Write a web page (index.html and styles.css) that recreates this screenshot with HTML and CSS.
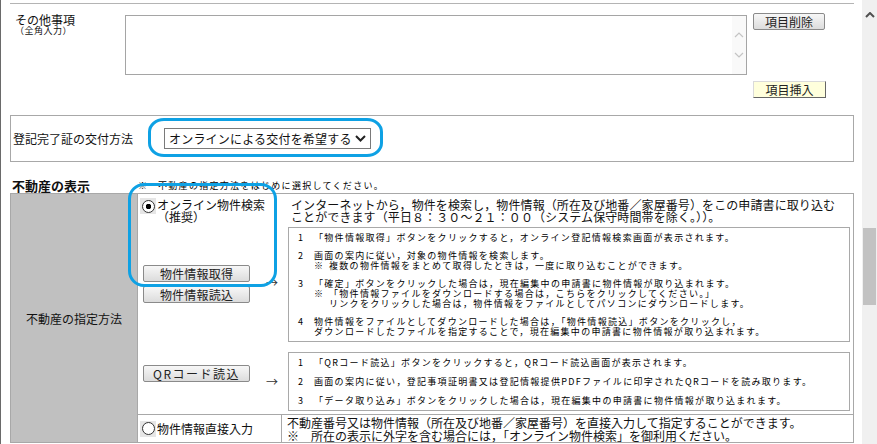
FILE: index.html
```html
<!DOCTYPE html>
<html lang="ja">
<head>
    <meta charset="UTF-8">
    <title>不動産の表示</title>
    <link rel="stylesheet" href="styles.css">
</head>
<body>
<div class="window">
    <div class="page">
        <div class="rule"></div>

        <section class="other">
            <div class="other-label">
                <div>その他事項</div>
                <div class="sub">（全角入力）</div>
            </div>
            <div class="memo">
                <textarea></textarea>
                <div class="memo-scroll">
                    <svg width="10" height="6" viewBox="0 0 10 6"><polyline points="1,5 5,1 9,5"/></svg>
                    <svg width="10" height="6" viewBox="0 0 10 6"><polyline points="1,1 5,5 9,1"/></svg>
                </div>
            </div>
            <div class="item-btns">
                <button class="btn btn-del">項目削除</button>
                <button class="btn btn-ins">項目挿入</button>
            </div>
        </section>

        <section class="delivery">
            <div class="delivery-label">登記完了証の交付方法</div>
            <div class="select">
                <span>オンラインによる交付を希望する</span>
                <svg class="select-arrow" width="11" height="7" viewBox="0 0 11 7"><polyline points="1,1 5.5,5.5 10,1"/></svg>
            </div>
        </section>

        <div class="heading">
            <h3>不動産の表示</h3>
            <p class="small"><span class="kome kome-head">※</span>不動産の指定方法をはじめに選択してください。</p>
        </div>

        <div class="prop-table">
            <div class="prop-head">不動産の指定方法</div>
            <div class="prop-body">
                <div class="opt-online">
                    <label class="radio-label wide"><span class="radio checked"></span><span>オンライン物件検索<br>（推奨）</span></label>
                    <p class="intro">インターネットから，物件を検索し，物件情報（所在及び地番／家屋番号）をこの申請書に取り込む<br>ことができます（平日８：３０～２１：００（システム保守時間帯を除く。））。</p>

                    <div class="btn-stack">
                        <button class="btn btn-wide">物件情報取得</button>
                        <button class="btn btn-wide">物件情報読込</button>
                    </div>
                    <div class="arrow arrow-1">→</div>
                    <ol class="steps small">
                        <li><span class="no">1</span><div>「物件情報取得」ボタンをクリックすると，オンライン登記情報検索画面が表示されます。</div></li>
                        <li><span class="no">2</span><div>画面の案内に従い，対象の物件情報を検索します。
                            <div class="note"><span class="kome">※</span><span>複数の物件情報をまとめて取得したときは，一度に取り込むことができます。</span></div></div></li>
                        <li><span class="no">3</span><div>「確定」ボタンをクリックした場合は，現在編集中の申請書に物件情報が取り込まれます。
                            <div class="note"><span class="kome">※</span><span>「物件情報ファイルをダウンロードする場合は，こちらをクリックしてください。」<br>リンクをクリックした場合は，物件情報をファイルとしてパソコンにダウンロードします。</span></div></div></li>
                        <li><span class="no">4</span><div>物件情報をファイルとしてダウンロードした場合は，「物件情報読込」ボタンをクリックし，<br>ダウンロードしたファイルを指定することで，現在編集中の申請書に物件情報が取り込まれます。</div></li>
                    </ol>

                    <button class="btn btn-wide btn-qr">QRコード読込</button>
                    <div class="arrow arrow-2">→</div>
                    <ol class="steps steps-qr small">
                        <li><span class="no">1</span><div>「QRコード読込」ボタンをクリックすると，QRコード読込画面が表示されます。</div></li>
                        <li><span class="no">2</span><div>画面の案内に従い，登記事項証明書又は登記情報提供PDFファイルに印字されたQRコードを読み取ります。</div></li>
                        <li><span class="no">3</span><div>「データ取り込み」ボタンをクリックした場合は，現在編集中の申請書に物件情報が取り込まれます。</div></li>
                    </ol>
                </div>

                <div class="opt-direct">
                    <label class="radio-label"><span class="radio"></span><span>物件情報直接入力</span></label>
                    <p class="direct-text">不動産番号又は物件情報（所在及び地番／家屋番号）を直接入力して指定することができます。<br>※　所在の表示に外字を含む場合には，「オンライン物件検索」を御利用ください。</p>
                </div>
            </div>
        </div>

        <!-- hand-drawn highlight marks -->
        <div class="mark mark-select"></div>
        <div class="mark mark-search"></div>
    </div>

    <div class="scrollbar">
        <svg width="10" height="6" viewBox="0 0 10 6"><polyline points="1,5 5,1 9,5"/></svg>
        <div class="thumb"></div>
    </div>
</div>
</body>
</html>
```

FILE: styles.css
```css
* {
    margin: 0;
    padding: 0;
    box-sizing: border-box;
}

body {
    font-family: "Noto Sans CJK JP", "Noto Sans", sans-serif;
    font-size: 12px;
    color: #111;
    background: #fff;
    overflow: hidden;
}

.window {
    display: flex;
    height: 444px;
    border-left: 1px solid #6a6a6a;
}

.page {
    position: relative;
    flex: 1;
    padding: 0 8px 0 9px;
}

.rule {
    margin-top: 3px;
    border-top: 1px solid #b4b4b4;
}

.small {
    font-size: 9px;
    letter-spacing: 1.3px;
    color: #000;
}

/* buttons */
.btn {
    font-family: inherit;
    font-size: 12px;
    color: #222;
    height: 17px;
    line-height: 15px;
    border: 1px solid #8a8a8a;
    border-radius: 2px;
    background: linear-gradient(#f7f7f7, #dcdcdc);
}

.btn-del {
    width: 72px;
}

.btn-ins {
    width: 73px;
    margin-top: 51px;
    border-radius: 0;
    border-color: #dadada #666 #666 #dadada;
    background: #ffffdc;
}

.btn-wide {
    width: 107px;
    letter-spacing: 0.2px;
}

/* その他事項 */
.other {
    display: flex;
    margin-top: 9px;
}

.other-label {
    width: 115px;
    padding-left: 5px;
    line-height: 13px;
}

.other-label .sub {
    font-size: 9px;
    line-height: 10px;
    letter-spacing: 0.5px;
}

.memo {
    display: flex;
    width: 622px;
    height: 60px;
    margin-top: 2px;
    border: 1px solid #a5a5a5;
}

.memo textarea {
    flex: 1;
    border: none;
    resize: none;
    outline: none;
}

.memo-scroll {
    width: 14px;
    background: #f9f9f9;
    display: flex;
    flex-direction: column;
    align-items: center;
    justify-content: center;
    gap: 14px;
}

.memo-scroll svg {
    display: block;
    fill: none;
    stroke: #c4c4c4;
    stroke-width: 1.2;
}

.item-btns {
    display: flex;
    flex-direction: column;
    align-items: flex-start;
    margin-left: 6px;
}

/* 登記完了証 */
.delivery {
    display: flex;
    align-items: center;
    height: 47px;
    margin-top: 17px;
    padding-left: 1px;
    border: 1px solid #a8a8a8;
}

.delivery-label {
    width: 152px;
    padding-left: 1px;
}

.select {
    display: flex;
    align-items: center;
    justify-content: space-between;
    width: 207px;
    height: 21px;
    padding: 0 4px 0 4px;
    border: 1px solid #7a7a7a;
    letter-spacing: 0.2px;
}

.select-arrow {
    fill: none;
    stroke: #222;
    stroke-width: 2;
}

/* 不動産の表示 */
.heading {
    display: flex;
    align-items: center;
    height: 15px;
    margin-top: 16px;
}

.heading h3 {
    width: 128px;
    padding-left: 2px;
    font-size: 13px;
}

.kome {
    display: inline-block;
    width: 15px;
}

.kome-head {
    width: 20px;
}

.prop-table {
    display: grid;
    grid-template-columns: 127px 1fr;
    border: 1px solid #a8a8a8;
}

.prop-head {
    display: flex;
    align-items: center;
    justify-content: center;
    background: #c0c0c0;
    border-right: 1px solid #a8a8a8;
}

.opt-online {
    display: grid;
    grid-template-columns: 127px 23px 1fr;
    row-gap: 4px;
    padding: 5px 3px 3px 0;
}

.radio-label {
    display: flex;
    align-items: flex-start;
    gap: 1px;
    padding-left: 2px;
    line-height: 12px;
}

.radio-label.wide {
    grid-column: 1 / 3;
}

.radio {
    display: flex;
    align-items: center;
    justify-content: center;
    width: 16px;
    height: 16px;
    margin-top: -1px;
    background: #e6e6e6;
}

.radio::before {
    content: "";
    width: 11px;
    height: 11px;
    border: 1px solid #333;
    border-radius: 50%;
    background: #fff;
}

.radio.checked::before {
    background: radial-gradient(circle, #000 0 2.5px, #fff 3px);
}

.intro {
    padding-left: 3px;
    line-height: 12px;
    letter-spacing: 0.1px;
}

.btn-stack {
    display: flex;
    flex-direction: column;
    gap: 4px;
    align-self: start;
    margin-top: 38px;
    padding-left: 5px;
}

.btn-qr {
    align-self: start;
    margin: 19px 0 0 5px;
    letter-spacing: 1.5px;
}

.arrow {
    align-self: start;
    padding-left: 1px;
    line-height: 12px;
    color: #333;
}

.arrow-1 {
    margin-top: 50px;
}

.arrow-2 {
    margin-top: 30px;
}

.steps {
    list-style: none;
    display: flex;
    flex-direction: column;
    gap: 8px;
    padding: 5px 0 4px 9px;
    border: 1px solid #a9a9a9;
    line-height: 10px;
}

.steps-qr {
    margin-top: 6px;
    padding: 5px 0 4px 9px;
    gap: 9px;
}

.steps li {
    display: flex;
}

.steps .no {
    width: 16px;
    flex-shrink: 0;
}

.note {
    display: flex;
}

.opt-direct {
    display: grid;
    grid-template-columns: 144px 1fr;
    border-top: 1px solid #a8a8a8;
}

.opt-direct .radio-label {
    align-items: center;
    border-right: 1px solid #a8a8a8;
}

.opt-direct .radio {
    margin-top: 0;
}

.direct-text {
    padding: 1px 0 0 5px;
    line-height: 13px;
}

/* blue highlight marks drawn over the form */
.mark {
    position: absolute;
    border: 3px solid #0ea1e4;
    border-radius: 16px;
}

.mark-select {
    left: 147px;
    top: 118px;
    width: 235px;
    height: 39px;
    border-radius: 16px / 14px;
}

.mark-search {
    left: 127px;
    top: 183px;
    width: 149px;
    height: 104px;
}

/* window scrollbar */
.scrollbar {
    display: flex;
    flex-direction: column;
    align-items: center;
    width: 15px;
    padding-top: 12px;
    background: #f0f0f0;
}

.scrollbar svg {
    display: block;
    fill: none;
    stroke: #505050;
    stroke-width: 2;
}

.thumb {
    width: 13px;
    height: 77px;
    margin-top: 210px;
    background: #c2c2c2;
}
```
